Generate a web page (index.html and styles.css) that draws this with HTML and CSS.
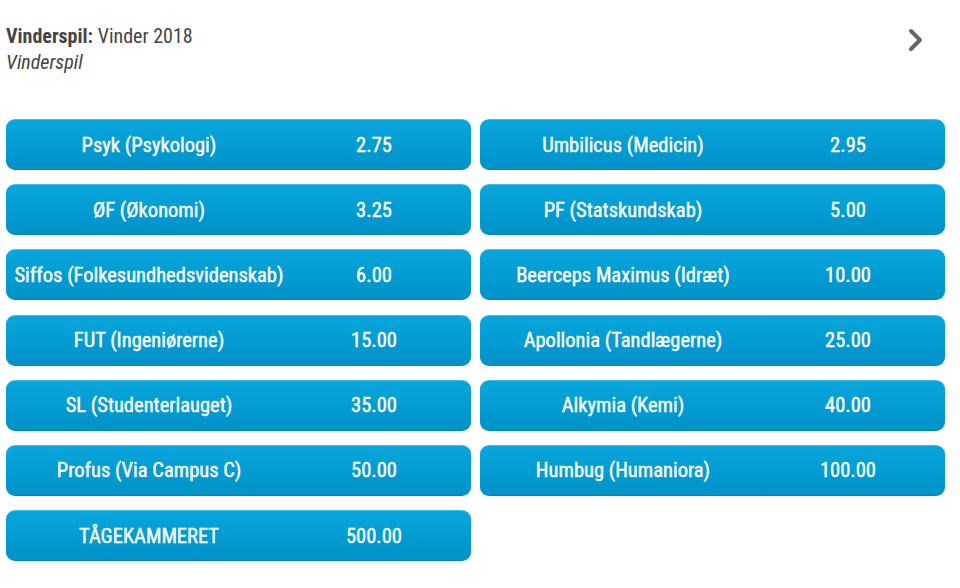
FILE: index.html
```html
<!DOCTYPE html>
<html lang="da">
<head>
<meta charset="utf-8">
<title>Vinderspil</title>
<link rel="stylesheet" href="styles.css">
</head>
<body>
<div class="page">
  <header class="head">
    <div class="titles">
      <div class="title"><b>Vinderspil:</b> Vinder 2018</div>
      <div class="sub">Vinderspil</div>
    </div>
    <svg class="chev" width="20" height="24" viewBox="0 0 20 24"><path d="M4 3 L13 12 L4 21" fill="none" stroke="#666" stroke-width="4" stroke-linecap="round" stroke-linejoin="round"/></svg>
  </header>
  <div class="grid">
    <div class="btn"><span class="name">Psyk (Psykologi)</span><span class="odds">2.75</span></div>
    <div class="btn"><span class="name">Umbilicus (Medicin)</span><span class="odds">2.95</span></div>
    <div class="btn"><span class="name">ØF (Økonomi)</span><span class="odds">3.25</span></div>
    <div class="btn"><span class="name">PF (Statskundskab)</span><span class="odds">5.00</span></div>
    <div class="btn"><span class="name">Siffos (Folkesundhedsvidenskab)</span><span class="odds">6.00</span></div>
    <div class="btn"><span class="name">Beerceps Maximus (Idræt)</span><span class="odds">10.00</span></div>
    <div class="btn"><span class="name">FUT (Ingeniørerne)</span><span class="odds">15.00</span></div>
    <div class="btn"><span class="name">Apollonia (Tandlægerne)</span><span class="odds">25.00</span></div>
    <div class="btn"><span class="name">SL (Studenterlauget)</span><span class="odds">35.00</span></div>
    <div class="btn"><span class="name">Alkymia (Kemi)</span><span class="odds">40.00</span></div>
    <div class="btn"><span class="name">Profus (Via Campus C)</span><span class="odds">50.00</span></div>
    <div class="btn"><span class="name">Humbug (Humaniora)</span><span class="odds">100.00</span></div>
    <div class="btn"><span class="name">TÅGEKAMMERET</span><span class="odds">500.00</span></div>
  </div>
</div>
</body>
</html>
```
FILE: styles.css
```css
* { box-sizing: border-box; }
html, body { margin: 0; padding: 0; background: #fff; }
body {
  font-family: "Roboto Condensed", "Liberation Sans Narrow", "Roboto", sans-serif;
  color: #444;
}
.page { padding: 23px 15px 0 6px; }
.head {
  display: flex;
  justify-content: space-between;
  align-items: flex-start;
  height: 96px;
}
.title { font-size: 20px; line-height: 26px; color: #444; }
.title b { font-weight: 700; }
.sub { font-size: 20px; line-height: 26px; font-style: italic; color: #444; }
.chev { margin-top: 5px; margin-right: 18px; }
.grid {
  display: grid;
  grid-template-columns: 465px 465px;
  column-gap: 9px;
  row-gap: 14.2px;
}
.btn {
  height: 51px;
  border-radius: 9px;
  background: linear-gradient(#08a6dc, #0092c9);
  border-top: 1px solid #3dbde8;
  border-bottom: 1px solid #0383b6;
  display: grid;
  grid-template-columns: 286px 164px;
  align-items: center;
  color: #fff;
  font-size: 20.5px;
  font-weight: 400;
  -webkit-text-stroke: 0.4px #fff;
}
.name, .odds { text-align: center; white-space: nowrap; }
```
